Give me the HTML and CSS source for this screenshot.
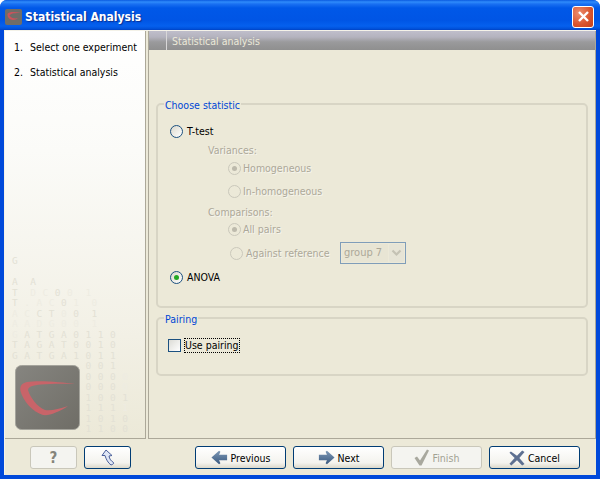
FILE: index.html

```html
<!DOCTYPE html>
<html lang="en">
<head>
    <meta charset="UTF-8">
    <title>Statistical Analysis</title>
    <link rel="stylesheet" href="styles.css">
</head>
<body>
    <div class="window">
        <div class="titlebar">
            <svg class="app-icon" width="17" height="16" viewBox="0 0 17 16">
                <rect width="17" height="16" rx="2" fill="#6f6d68"/>
                <path d="M16 4C10 2.500 4 2.500 2.500 5C2 8 5 11 8 11C10 11 12 10 13 9C10 10 6 9 4.500 6.500C5 4.500 10 3.800 16 4Z" fill="#c9545c"/>
            </svg>
            <span class="title">Statistical Analysis</span>
            <div class="close">
                <svg width="13" height="13" viewBox="0 0 13 13">
                    <path d="M2 2L11 11M11 2L2 11" stroke="#fff" stroke-width="2.400"/>
                </svg>
            </div>
        </div>

        <div class="client">
            <div class="main">
                <div class="sidebar">
                    <div class="matrix">
                        <div class="matrix-row">G</div>
                        <div class="matrix-row">&nbsp;</div>
                        <div class="matrix-row">A&nbsp;&nbsp;A</div>
                        <div class="matrix-row">T&nbsp;&nbsp;<i>D C</i>&nbsp;0&nbsp;<i>0&nbsp;&nbsp;1</i></div>
                        <div class="matrix-row">T&nbsp;<i>.&nbsp;A C</i>&nbsp;0&nbsp;<i>1&nbsp;&nbsp;0</i></div>
                        <div class="matrix-row"><i>A C</i>&nbsp;C T&nbsp;<i>0</i>&nbsp;0&nbsp;<i>&nbsp;</i>1</div>
                        <div class="matrix-row"><i>A A D G</i>&nbsp;<i>0 0</i>&nbsp;<i>&nbsp;1</i></div>
                        <div class="matrix-row"><i>G</i>&nbsp;A T G A 0 1 1 0</div>
                        <div class="matrix-row">T A G A T 0 0 1 0</div>
                        <div class="matrix-row">G A T G A 1 0 1 1</div>
                        <div class="matrix-row">&nbsp;&nbsp;&nbsp;&nbsp;&nbsp;&nbsp;&nbsp;&nbsp;&nbsp;&nbsp;&nbsp;&nbsp;0 0 1</div>
                        <div class="matrix-row">&nbsp;&nbsp;&nbsp;&nbsp;&nbsp;&nbsp;&nbsp;&nbsp;&nbsp;&nbsp;&nbsp;&nbsp;0 0 0 <i>0</i></div>
                        <div class="matrix-row">&nbsp;&nbsp;&nbsp;&nbsp;&nbsp;&nbsp;&nbsp;&nbsp;&nbsp;&nbsp;&nbsp;&nbsp;0 0 0 <i>0</i></div>
                        <div class="matrix-row">&nbsp;&nbsp;&nbsp;&nbsp;&nbsp;&nbsp;&nbsp;&nbsp;&nbsp;&nbsp;&nbsp;&nbsp;1 0 0 1</div>
                        <div class="matrix-row">&nbsp;&nbsp;&nbsp;&nbsp;&nbsp;&nbsp;&nbsp;&nbsp;&nbsp;&nbsp;&nbsp;&nbsp;1 1 1 <i>1</i></div>
                        <div class="matrix-row">&nbsp;&nbsp;&nbsp;&nbsp;&nbsp;&nbsp;&nbsp;&nbsp;&nbsp;&nbsp;&nbsp;&nbsp;1 0 1 0</div>
                        <div class="matrix-row">&nbsp;&nbsp;&nbsp;&nbsp;&nbsp;&nbsp;&nbsp;&nbsp;&nbsp;&nbsp;&nbsp;&nbsp;1 1 0 0</div>
                    </div>
                    <ol class="steps">
                        <li><span class="num">1.</span>Select one experiment</li>
                        <li><span class="num">2.</span>Statistical analysis</li>
                    </ol>
                    <svg class="logo" width="65" height="65" viewBox="0 0 65 65">
                        <defs>
                            <linearGradient id="logobg" x1="0" y1="0" x2="1" y2="1">
                                <stop offset="0" stop-color="#868580"/>
                                <stop offset="1" stop-color="#6f6d66"/>
                            </linearGradient>
                        </defs>
                        <rect x="0.500" y="0.500" width="64" height="64" rx="6" fill="url(#logobg)" stroke="#a5a49c"/>
                        <path d="M60 19C46 17 24 15 12 17C7 18 4.500 21 5.500 26C8 36 18 47 28 50C34 51 44 47 53 41C44 44 36 46 30 45C22 42 15 32 13 25C13 22 18 20 26 19.500C36 18.500 48 18.500 60 19Z" fill="#c86469"/>
                    </svg>
                </div>

                <div class="content">
                    <div class="content-head">
                        <div class="head-tab"></div>
                        <div class="head-title">Statistical analysis</div>
                    </div>
                    <div class="content-body">
                        <fieldset class="group group-statistic">
                            <legend>Choose statistic</legend>
                            <div class="stat-grid">
                                <div class="opt"><span class="radio"></span>T-test</div>
                                <div class="opt sub disabled">Variances:</div>
                                <div class="opt subsub disabled"><span class="radio checked"></span>Homogeneous</div>
                                <div class="opt subsub disabled"><span class="radio"></span>In-homogeneous</div>
                                <div class="opt sub disabled">Comparisons:</div>
                                <div class="opt subsub disabled"><span class="radio checked"></span>All pairs</div>
                                <div class="opt subsub2 disabled">
                                    <span class="radio"></span><span class="ref-label">Against reference</span>
                                    <div class="select">
                                        <span class="select-value">group 7</span>
                                        <span class="select-btn">
                                            <svg width="11" height="8" viewBox="0 0 11 8"><path d="M1.500 1.500L5.500 5.500L9.500 1.500" fill="none" stroke="#c4c2b4" stroke-width="2.200"/></svg>
                                        </span>
                                    </div>
                                </div>
                                <div class="opt"><span class="radio checked"></span>ANOVA</div>
                            </div>
                        </fieldset>
                        <fieldset class="group group-pairing">
                            <legend>Pairing</legend>
                            <div class="check-row"><span class="checkbox"></span><span class="focus">Use pairing</span></div>
                        </fieldset>
                    </div>
                </div>
            </div>

            <div class="footer">
                <div class="btn btn-small is-disabled"><span class="help">?</span></div>
                <div class="btn btn-small">
                    <svg width="14" height="17" viewBox="0 0 14 17"><path d="M5 1L1 6.500L4 6.500C5 10 7 14 10 16C12 15.500 13 14.500 12.500 13.500C10 12 8.500 10 8 7L11 6.500Z" fill="#dfe6f5" stroke="#4a5f9a"/></svg>
                </div>
                <div class="spacer"></div>
                <div class="btn">
                    <svg width="17" height="15" viewBox="0 0 19 16"><defs><linearGradient id="arrowl" x1="0" y1="0" x2="0" y2="1"><stop offset="0" stop-color="#7d97b5"/><stop offset="1" stop-color="#3a5a80"/></linearGradient></defs><path d="M0.500 8L9 0.500L10.500 1.500L9 5H18V11H9L10.500 14.500L9 15.500Z" fill="url(#arrowl)"/></svg>
                    Previous
                </div>
                <div class="btn">
                    <svg width="17" height="15" viewBox="0 0 19 16"><defs><linearGradient id="arrowr" x1="0" y1="0" x2="0" y2="1"><stop offset="0" stop-color="#7d97b5"/><stop offset="1" stop-color="#3a5a80"/></linearGradient></defs><path d="M18.500 8L10 0.500L8.500 1.500L10 5H1V11H10L8.500 14.500L10 15.500Z" fill="url(#arrowr)"/></svg>
                    Next
                </div>
                <div class="btn is-disabled">
                    <svg width="16" height="17" viewBox="0 0 16 17"><path d="M0.500 9L3 7.500L6 11.500L13 0.500L15 1.500L7.500 16.500H5.500Z" fill="#a8a89e"/></svg>
                    Finish
                </div>
                <div class="btn">
                    <svg width="16" height="16" viewBox="0 0 17 17"><path d="M2 1.500L8.500 6L14 0.500L16.500 2L11 8.500L16.500 15L14 16.500L8.500 11L2.500 16.500L0.500 14.500L6 8.500L0.500 3Z" fill="#5e7091"/></svg>
                    Cancel
                </div>
            </div>
        </div>
    </div>
</body>
</html>
```

FILE: styles.css

```css
html, body {
    margin: 0;
    padding: 0;
}
body {
    width: 600px;
    height: 479px;
    overflow: hidden;
    background: #fff;
    font-family: "DejaVu Sans Condensed", "DejaVu Sans", sans-serif;
    font-size: 10.500px;
    color: #000;
}
.window {
    width: 600px;
    height: 479px;
    display: flex;
    flex-direction: column;
    background: #0049da;
    border-radius: 7px 7px 0 0;
    overflow: hidden;
}
.titlebar {
    height: 30px;
    flex: none;
    display: flex;
    align-items: center;
    padding: 3px 6px 0 5px;
    box-sizing: border-box;
    background: linear-gradient(to bottom, #0a5ae0 0, #2f8bfb 2px, #1a70f2 4px, #0058e8 8px, #0055e5 20px, #0560ee 26px, #0050d8 29px, #003fc0 30px);
}
.app-icon {
    flex: none;
}
.title {
    margin-left: 3px;
    font-size: 12px;
    font-weight: bold;
    color: #fff;
    text-shadow: 1px 1px 1px #0a2f90;
}
.close {
    margin-left: auto;
    width: 20px;
    height: 20px;
    display: flex;
    align-items: center;
    justify-content: center;
    background: radial-gradient(circle at 30% 30%, #ec8d6e, #d9532c 60%, #c4401a);
    border: 1px solid #fff;
    border-radius: 3px;
}
.client {
    flex: 1;
    margin: 0 4px 4px 4px;
    background: #ece9d8;
    display: flex;
    flex-direction: column;
    border-top: 1px solid #f4f2e8;
    border-left: 1px solid #f4f2e8;
    min-height: 0;
}
.main {
    height: 408px;
    flex: none;
    display: flex;
    gap: 2px;
}
.sidebar {
    width: 141px;
    flex: none;
    box-sizing: border-box;
    position: relative;
    background: linear-gradient(to bottom, #ffffff 0, #fbfbf8 120px, #f3f1e7 290px, #ece9d8 100%);
    border-right: 1px solid #aca899;
    border-bottom: 1px solid #aca899;
}
.matrix {
    position: absolute;
    left: 7px;
    top: 225px;
    font-family: "DejaVu Sans Mono", monospace;
    font-size: 9.500px;
    line-height: 10.500px;
    letter-spacing: 0.400px;
    color: #e3e1d5;
    white-space: nowrap;
}
.matrix i {
    font-style: normal;
    color: #eeece2;
}
.steps {
    list-style: none;
    margin: 0;
    padding: 9px 0 0 9px;
    position: relative;
}
.steps li {
    height: 25px;
    line-height: 15px;
    display: flex;
}
.num {
    width: 16px;
}
.logo {
    position: absolute;
    left: 10px;
    top: 334px;
}
.content {
    flex: 1;
    border-left: 1px solid #aca899;
    border-right: 1px solid #aca899;
    border-bottom: 1px solid #aca899;
    min-width: 0;
}
.content-head {
    height: 19px;
    display: flex;
    background: linear-gradient(to bottom, #bfbecb 0, #b4b3be 6px, #9a9a9c 11px, #8f8f8f 100%);
}
.head-tab {
    width: 17px;
    border-right: 1px solid #d8d7d8;
}
.head-title {
    padding: 1px 0 0 5px;
    line-height: 18px;
    color: #ece9d8;
}
.content-body {
    padding: 45px 7px 0 7px;
}
.group {
    margin: 0;
    padding: 0;
    min-width: 0;
    border: 2px solid #d8d5c5;
    border-radius: 5px;
}
.group legend {
    margin-left: 6px;
    padding: 4px 1px 0;
    color: #0046d5;
    line-height: 13px;
}
.group-statistic {
    height: 213px;
    box-sizing: border-box;
}
.group-pairing {
    height: 67px;
    box-sizing: border-box;
    margin-top: 1px;
}
.stat-grid {
    display: grid;
    grid-template-rows: 20px 18px 18px 28px 14px 20px 28px 20px;
    padding: 9px 0 0 12px;
}
.opt {
    display: flex;
    align-items: center;
    gap: 4px;
}
.sub {
    padding-left: 38px;
}
.subsub {
    padding-left: 58px;
    gap: 2px;
}
.subsub2 {
    padding-left: 60px;
    gap: 3px;
}
.disabled {
    color: #aca899;
    text-shadow: 1px 1px 0 #f6f5ee;
}
.radio {
    width: 11px;
    height: 11px;
    flex: none;
    display: inline-flex;
    align-items: center;
    justify-content: center;
    border: 1px solid #1c5180;
    border-radius: 50%;
    background: linear-gradient(135deg, #dcd9cc, #ffffff);
}
.radio.checked::after {
    content: "";
    width: 5px;
    height: 5px;
    border-radius: 50%;
    background: #24a824;
}
.disabled .radio {
    border-color: #cac8bb;
    background: #ece9d8;
}
.disabled .radio.checked::after {
    background: #bdbaac;
}
.ref-label {
    width: 91px;
    white-space: nowrap;
}
.select {
    width: 66px;
    height: 22px;
    box-sizing: border-box;
    display: flex;
    align-items: center;
    justify-content: space-between;
    padding: 1px;
    border: 1px solid #7f9db9;
    text-shadow: none;
}
.select-value {
    padding-left: 2px;
    color: #aca899;
    font-size: 11px;
    line-height: 18px;
    width: 44px;
    background: #e8e5d4;
}
.select-btn {
    width: 15px;
    height: 18px;
    display: flex;
    align-items: center;
    justify-content: center;
    background: #e6e4d6;
    border-radius: 2px;
}
.check-row {
    display: flex;
    align-items: center;
    gap: 4px;
    padding: 13px 0 0 10px;
}
.checkbox {
    width: 11px;
    height: 11px;
    border: 1px solid #1c5180;
    background: linear-gradient(135deg, #dcdcd6, #ffffff);
}
.focus {
    outline: 1px dotted #000;
    line-height: 13px;
}
.footer {
    flex: 1;
    display: flex;
    align-items: flex-start;
    gap: 7px;
    padding: 7px 15px 0 25px;
}
.spacer {
    width: 50px;
}
.btn {
    width: 91px;
    height: 23px;
    box-sizing: border-box;
    display: flex;
    align-items: center;
    justify-content: center;
    gap: 3px;
    border: 1px solid #003c74;
    border-radius: 3px;
    background: linear-gradient(to bottom, #ffffff, #f4f3ee 75%, #dcd8ca);
}
.btn-small {
    width: 47px;
}
.btn.is-disabled {
    color: #a1a192;
    border-color: #c9c7ba;
    background: #f4f4f0;
}
.help {
    font-size: 15px;
    font-weight: bold;
    color: #85847b;
}
```
